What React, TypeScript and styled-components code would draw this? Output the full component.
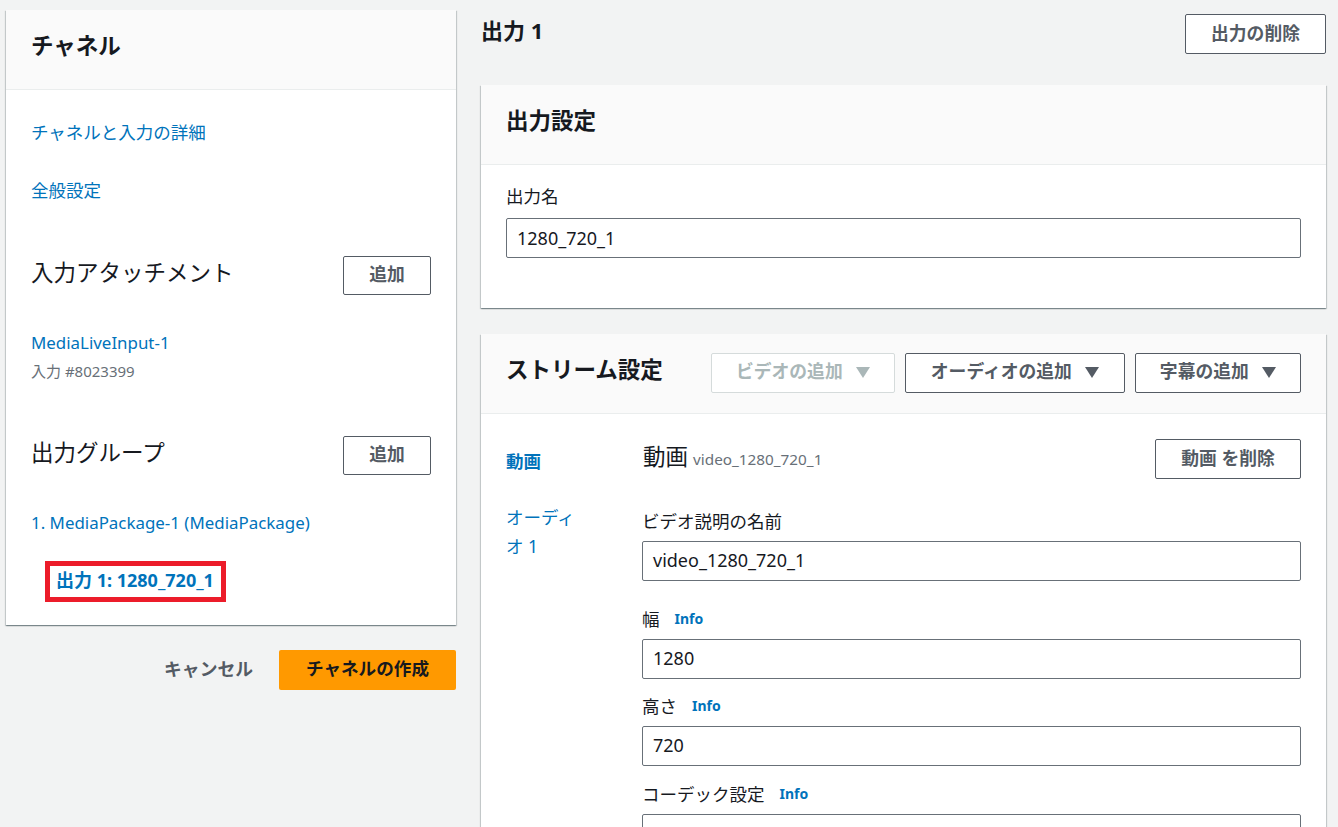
import React from "react";
import styled, { createGlobalStyle } from "styled-components";

const Global = createGlobalStyle`
  html, body { margin: 0; padding: 0; height: 827px; overflow: hidden; background: #f2f3f3; }
  body { font-family: "Noto Sans", "Noto Sans CJK JP", sans-serif; color: #16191f; font-size: 17.5px; }
  * { box-sizing: border-box; }
`;

const Page = styled.div`
  display: grid;
  grid-template-columns: 450px 845px;
  column-gap: 25px;
  padding: 0 12px 0 6px;
  height: 827px;
  overflow: hidden;
  align-items: start;
`;
const Column = styled.div`
  display: flex;
  flex-direction: column;
`;
const LeftColumn = styled(Column)`
  padding-top: 10px;
`;
const Card = styled.section`
  background: #fff;
  box-shadow: 0 1px 1px 0 rgba(0, 28, 36, 0.3), 1px 1px 1px 0 rgba(0, 28, 36, 0.15), -1px 1px 1px 0 rgba(0, 28, 36, 0.15);
`;
const CardHeader = styled.header`
  height: 80px;
  background: #fafafa;
  border-bottom: 1px solid #eaeded;
  display: flex;
  align-items: center;
  padding: 0 25px 8px;
  flex-shrink: 0;
`;
const CardTitle = styled.h2`
  margin: 0;
  font-size: 22.5px;
  font-weight: 700;
  line-height: 30px;
`;
const NavBody = styled.div`
  display: flex;
  flex-direction: column;
  padding: 0 25px;
  height: 535px;
`;
const NavLink = styled.a<{ $top: number }>`
  display: block;
  margin-top: ${(p) => p.$top}px;
  color: #0073bb;
  font-size: 17.5px;
  line-height: 24px;
`;
const LatinNavLink = styled(NavLink)`
  font-size: 16.9px;
`;
const SectionRow = styled.div<{ $top: number }>`
  display: flex;
  justify-content: space-between;
  align-items: center;
  margin-top: ${(p) => p.$top}px;
`;
const SectionTitle = styled.h3`
  margin: 0 0 7px;
  font-size: 22.5px;
  font-weight: 400;
  line-height: 30px;
`;
const Button = styled.button<{ $w: number; $disabled?: boolean }>`
  width: ${(p) => p.$w}px;
  height: 40px;
  padding: 0 0 3px;
  background: #fff;
  border: 1px solid ${(p) => (p.$disabled ? "#d5dbdb" : "#545b64")};
  border-radius: 2px;
  color: ${(p) => (p.$disabled ? "#aab7b8" : "#545b64")};
  font-family: inherit;
  font-size: 17.8px;
  font-weight: 700;
  line-height: 22px;
  display: inline-flex;
  align-items: center;
  justify-content: center;
  gap: 13px;
  flex-shrink: 0;
`;
const AddButton = styled(Button)`
  height: 39px;
  margin-bottom: 1px;
`;
const Caret = styled.svg`
  width: 14px;
  height: 11px;
  margin-top: 3px;
  fill: currentColor;
`;
const SubText = styled.div`
  margin-top: 6px;
  font-size: 15px;
  line-height: 20px;
  color: #687078;
`;
const Highlight = styled.div`
  align-self: flex-start;
  margin: 26px 0 0 14px;
  border: 5px solid #ec1c2a;
  width: 181px;
  height: 41px;
  padding: 0 0 3px 6px;
  display: flex;
  align-items: center;
  white-space: nowrap;
`;
const HighlightLink = styled.a`
  color: #0073bb;
  font-size: 18px;
  font-weight: 700;
  line-height: 24px;
`;
const Actions = styled.div`
  display: flex;
  justify-content: flex-end;
  align-items: center;
  margin-top: 25px;
  gap: 26px;
`;
const TextAction = styled.span`
  color: #545b64;
  font-size: 17.8px;
  font-weight: 700;
  padding-bottom: 5px;
`;
const Primary = styled.button`
  width: 177px;
  height: 40px;
  border: 0;
  border-radius: 2px;
  background: #ff9900;
  color: #16191f;
  font-family: inherit;
  font-size: 17.6px;
  font-weight: 700;
  padding: 0 0 5px;
`;
const TitleRow = styled.div`
  display: flex;
  justify-content: space-between;
  align-items: flex-start;
  padding-top: 14px;
  height: 85px;
`;
const PageTitle = styled.h1`
  margin: 1px 0 0;
  font-size: 22px;
  line-height: 30px;
  font-weight: 700;
`;
const SettingsBody = styled.div`
  padding: 18px 25px 0;
  height: 143px;
`;
const FieldLabel = styled.label`
  display: flex;
  align-items: center;
  gap: 15px;
  font-size: 17.5px;
  line-height: 26px;
  color: #16191f;
  height: 26px;
`;
const InfoLink = styled.a`
  color: #0073bb;
  font-size: 14px;
  font-weight: 700;
`;
const TextInput = styled.div`
  height: 40px;
  border: 1px solid #687078;
  border-radius: 2px;
  background: #fff;
  padding: 0 10px;
  font-size: 18px;
  line-height: 38px;
  margin-top: 9px;
`;
const LabelledInput = styled(TextInput)`
  margin-top: 7px;
  line-height: 37px;
`;
const StreamCard = styled(Card)`
  margin-top: 26px;
  height: 600px;
`;
const StreamHeader = styled(CardHeader)`
  justify-content: flex-start;
`;
const StreamTitle = styled(CardTitle)`
  margin-right: 48px;
`;
const StreamButtons = styled.div`
  display: flex;
  gap: 10px;
  margin-top: 6px;
`;
const StreamBody = styled.div`
  display: grid;
  grid-template-columns: 136px 1fr;
  padding: 25px 25px 0;
`;
const SideNav = styled.nav`
  display: flex;
  flex-direction: column;
  width: 76px;
`;
const SideLink = styled.a<{ $bold?: boolean }>`
  color: #0073bb;
  font-size: 17.5px;
  line-height: 29px;
  font-weight: ${(p) => (p.$bold ? 700 : 400)};
`;
const SideActive = styled(SideLink)`
  margin-top: 8px;
  margin-bottom: 27px;
`;
const VideoHead = styled.div`
  display: flex;
  justify-content: space-between;
  align-items: flex-start;
  height: 69px;
`;
const VideoTitle = styled.div`
  font-size: 22.5px;
  line-height: 36px;
  display: flex;
  align-items: baseline;
  gap: 5px;
  padding-left: 1px;
`;
const VideoName = styled.span`
  font-size: 15.3px;
  color: #687078;
`;
const Field = styled.div<{ $top?: number }>`
  margin-top: ${(p) => p.$top ?? 0}px;
`;

const CaretIcon = () => (
  <Caret viewBox="0 0 14 11">
    <path d="M0 0h14L7 11z" />
  </Caret>
);

export default function App() {
  return (
    <Page>
      <Global />
      <LeftColumn>
        <Card>
          <CardHeader>
            <CardTitle>チャネル</CardTitle>
          </CardHeader>
          <NavBody>
            <NavLink $top={30}>チャネルと入力の詳細</NavLink>
            <NavLink $top={34}>全般設定</NavLink>
            <SectionRow $top={54}>
              <SectionTitle>入力アタッチメント</SectionTitle>
              <AddButton $w={88}>追加</AddButton>
            </SectionRow>
            <LatinNavLink $top={35}>MediaLiveInput-1</LatinNavLink>
            <SubText>入力 #8023399</SubText>
            <SectionRow $top={55}>
              <SectionTitle>出力グループ</SectionTitle>
              <AddButton $w={88}>追加</AddButton>
            </SectionRow>
            <LatinNavLink $top={35}>1. MediaPackage-1 (MediaPackage)</LatinNavLink>
            <Highlight>
              <HighlightLink>出力 1: 1280_720_1</HighlightLink>
            </Highlight>
          </NavBody>
        </Card>
        <Actions>
          <TextAction>キャンセル</TextAction>
          <Primary>チャネルの作成</Primary>
        </Actions>
      </LeftColumn>
      <Column>
        <TitleRow>
          <PageTitle>出力 1</PageTitle>
          <Button $w={141}>出力の削除</Button>
        </TitleRow>
        <Card>
          <CardHeader>
            <CardTitle>出力設定</CardTitle>
          </CardHeader>
          <SettingsBody>
            <FieldLabel>出力名</FieldLabel>
            <TextInput>1280_720_1</TextInput>
          </SettingsBody>
        </Card>
        <StreamCard>
          <StreamHeader>
            <StreamTitle>ストリーム設定</StreamTitle>
            <StreamButtons>
              <Button $w={184} $disabled>ビデオの追加 <CaretIcon /></Button>
              <Button $w={220}>オーディオの追加 <CaretIcon /></Button>
              <Button $w={166}>字幕の追加 <CaretIcon /></Button>
            </StreamButtons>
          </StreamHeader>
          <StreamBody>
            <SideNav>
              <SideActive $bold>動画</SideActive>
              <SideLink>オーディオ 1</SideLink>
            </SideNav>
            <div>
              <VideoHead>
                <VideoTitle>
                  動画 <VideoName>video_1280_720_1</VideoName>
                </VideoTitle>
                <Button $w={146}>動画 を削除</Button>
              </VideoHead>
              <Field>
                <FieldLabel>ビデオ説明の名前</FieldLabel>
                <LabelledInput>video_1280_720_1</LabelledInput>
              </Field>
              <Field $top={25}>
                <FieldLabel>幅 <InfoLink>Info</InfoLink></FieldLabel>
                <LabelledInput>1280</LabelledInput>
              </Field>
              <Field $top={14}>
                <FieldLabel>高さ <InfoLink>Info</InfoLink></FieldLabel>
                <LabelledInput>720</LabelledInput>
              </Field>
              <Field $top={15}>
                <FieldLabel>コーデック設定 <InfoLink>Info</InfoLink></FieldLabel>
                <LabelledInput>H.264</LabelledInput>
              </Field>
            </div>
          </StreamBody>
        </StreamCard>
      </Column>
    </Page>
  );
}
